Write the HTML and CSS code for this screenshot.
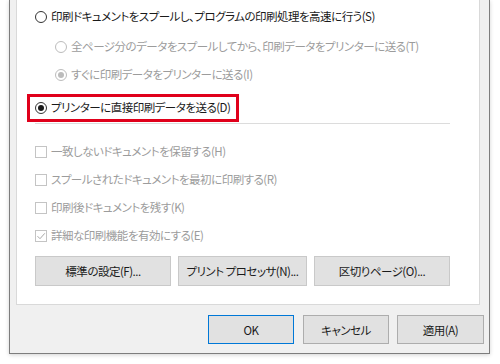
FILE: index.html
```html
<!DOCTYPE html>
<html lang="ja">
<head>
<meta charset="utf-8">
<link rel="stylesheet" href="styles.css">
</head>
<body>
<div class="window">
  <div class="panel">
    <div class="row"><span class="radio"></span><span>印刷ドキュメントをスプールし、プログラムの印刷処理を高速に行う(S)</span></div>
    <div class="row sub disabled gap8"><span class="radio"></span><span>全ページ分のデータをスプールしてから、印刷データをプリンターに送る(T)</span></div>
    <div class="row sub disabled gap6"><span class="radio on"></span><span>すぐに印刷データをプリンターに送る(I)</span></div>
    <div class="highlight"><div class="row"><span class="radio on"></span><span>プリンターに直接印刷データを送る(D)</span></div></div>
    <div class="sep"></div>
    <div class="checks">
      <div class="row disabled"><span class="check"></span><span>一致しないドキュメントを保留する(H)</span></div>
      <div class="row disabled"><span class="check"></span><span>スプールされたドキュメントを最初に印刷する(R)</span></div>
      <div class="row disabled"><span class="check"></span><span>印刷後ドキュメントを残す(K)</span></div>
      <div class="row disabled"><span class="check on"><svg viewBox="0 0 12 12" width="12" height="12"><path d="M2.5 6.2 L5 8.7 L9.8 3.3" fill="none" stroke="#a8a8a8" stroke-width="1"/></svg></span><span>詳細な印刷機能を有効にする(E)</span></div>
    </div>
    <div class="btnrow">
      <button class="btn w136">標準の設定(F)...</button>
      <button class="btn w129">プリント プロセッサ(N)...</button>
      <button class="btn w136">区切りページ(O)...</button>
    </div>
  </div>
  <div class="footer">
    <button class="btn fbtn default">OK</button>
    <button class="btn fbtn">キャンセル</button>
    <button class="btn fbtn apply">適用(A)</button>
  </div>
</div>
</body>
</html>
```
FILE: styles.css
```css
html, body {
  margin: 0;
  padding: 0;
  background: #ffffff;
}
body {
  width: 500px;
  height: 364px;
  overflow: hidden;
  font-family: "Noto Sans CJK JP", "Noto Sans", sans-serif;
  font-feature-settings: "palt";
  font-size: 11.5px;
  letter-spacing: -0.5px;
  color: #1a1a1a;
}
.window {
  margin-left: 9px;
  width: 479px;
  height: 353px;
  background: #f0f0f0;
  border: 1px solid #7d7d7d;
  border-top: none;
  box-shadow: 0 1px 4px rgba(0,0,0,0.18);
  display: flex;
  flex-direction: column;
}
.panel {
  margin-left: 6px;
  width: 464px;
  height: 305px;
  box-sizing: border-box;
  background: #ffffff;
  border: 1px solid #d9d9d9;
  border-top: none;
  padding: 6px 0 0 18px;
  display: flex;
  flex-direction: column;
  align-items: flex-start;
}
.row {
  height: 22px;
  display: flex;
  align-items: center;
  gap: 4px;
  white-space: nowrap;
  line-height: 1;
}
.row.sub { margin-left: 20px; }
.gap8 { margin-top: 8px; }
.gap6 { margin-top: 6px; }
.disabled { color: #9c9c9c; }
.radio {
  width: 12px;
  height: 12px;
  box-sizing: border-box;
  border: 1px solid #333333;
  border-radius: 50%;
  position: relative;
  flex: none;
}
.disabled .radio { border-color: #bcbcbc; }
.radio.on::after {
  content: "";
  position: absolute;
  left: 2px;
  top: 2px;
  width: 6px;
  height: 6px;
  border-radius: 50%;
  background: #1a1a1a;
}
.disabled .radio.on::after { background: #bcbcbc; }
.highlight {
  margin-top: 8px;
  margin-left: -8px;
  width: 212px;
  height: 28px;
  box-sizing: border-box;
  border: 3px solid #e0001b;
  padding-left: 5px;
  display: flex;
  align-items: center;
}
.sep {
  margin-top: 1px;
  width: 415px;
  height: 1px;
  background: #dcdcdc;
}
.checks {
  margin-top: 17px;
  display: flex;
  flex-direction: column;
  gap: 6px;
}
.check {
  width: 12px;
  height: 12px;
  box-sizing: border-box;
  border: 1px solid #c4c4c4;
  flex: none;
  display: flex;
}
.check svg { margin: -1px; }
.btnrow {
  margin-top: 9px;
  display: flex;
  gap: 7px;
}
.btn {
  font: inherit;
  font-feature-settings: "palt";
  letter-spacing: -0.5px;
  color: #1a1a1a;
  height: 30px;
  background: #e1e1e1;
  border: 1px solid #c9c9c9;
  padding: 0;
  margin: 0;
  display: flex;
  align-items: center;
  justify-content: center;
  white-space: nowrap;
}
.w136 { width: 136px; }
.w129 { width: 129px; }
.footer {
  flex: 1;
  display: flex;
  justify-content: flex-end;
  align-items: flex-start;
  padding: 10px 5px 0 0;
  gap: 8px;
}
.fbtn {
  width: 86px;
  height: 29px;
  border-color: #adadad;
}
.fbtn.default {
  border-color: #0078d7;
  margin-right: 1px;
}
.fbtn.apply { width: 87px; }
```
